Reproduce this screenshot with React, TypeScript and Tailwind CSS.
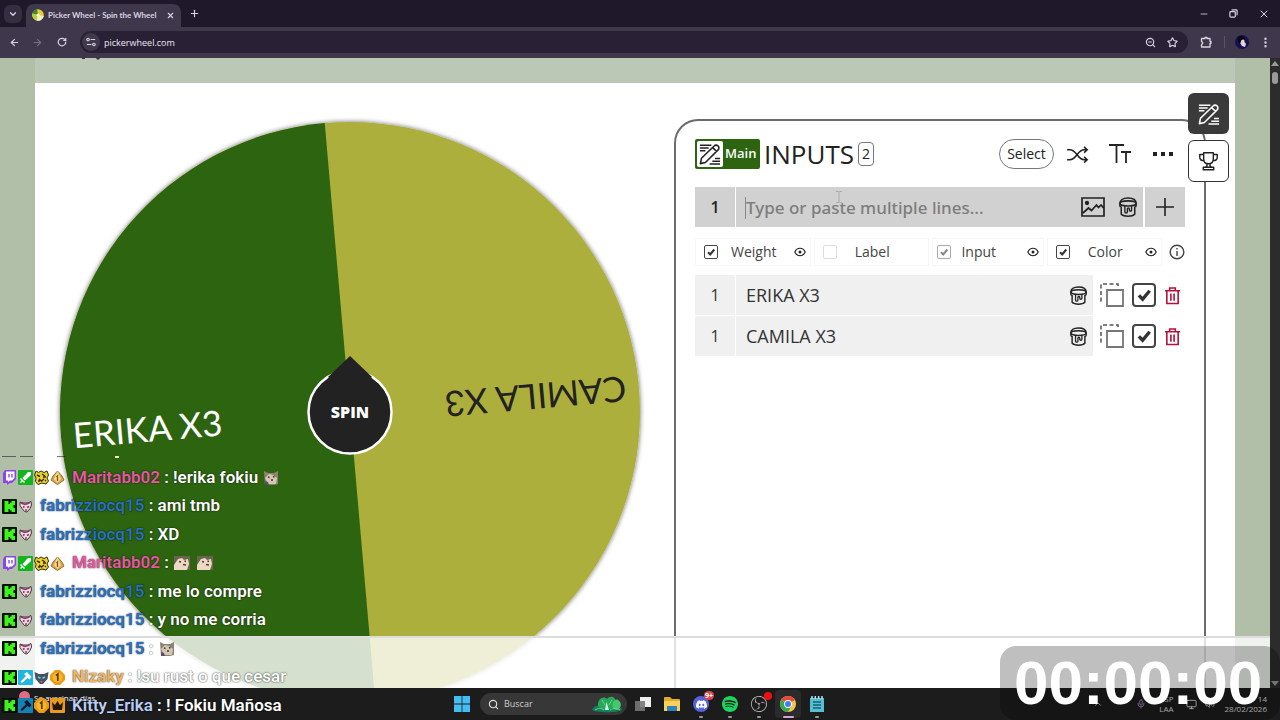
import { useState } from 'react';
import type { ReactNode } from 'react';
import {
  ArrowLeft,
  ArrowRight,
  ChevronDown,
  ChevronUp,
  EllipsisVertical,
  Mic,
  Minus,
  Monitor,
  Plus,
  RotateCw,
  Search,
  Star,
  Volume2,
  X,
  ZoomOut,
} from 'lucide-react';
import { SiObsstudio, SiSpotify, SiDiscord } from 'react-icons/si';

type IconProps = { className?: string };

const PencilLinesIcon = ({ className }: IconProps) => (
  <svg viewBox="0 0 24 24" fill="none" stroke="currentColor" className={className}>
    <path d="M1 2.500h12.500M1 5.500h9.500M1 8.500h6M17.500 17h5.500M14.500 20h8.500M11.500 23h11.500" strokeWidth="1.600" />
    <path
      d="M1.500 22.500l1.200-5.800L16.500 3.200a3 3 0 0 1 4.300 0 3 3 0 0 1 0 4.300L7 21.200zM15 5l4.200 4.200"
      strokeWidth="1.700"
      strokeLinejoin="round"
    />
  </svg>
);

const TrophyIcon = ({ className }: IconProps) => (
  <svg viewBox="0 0 24 24" fill="none" stroke="currentColor" strokeWidth="1.600" strokeLinejoin="round" className={className}>
    <path d="M6.500 2h11v7c0 3.500-2 5.500-5.500 5.500s-5.500-2-5.500-5.500z" />
    <path d="M6.500 4H2v3c0 2.300 2 4 5 4M17.500 4H22v3c0 2.300-2 4-5 4M10.300 14.500v2.500L8.500 18.500M13.700 14.500v2.500l1.800 1.500M6 18.500h12v3H6z" />
  </svg>
);

const BucketIcon = ({ className }: IconProps) => (
  <svg viewBox="2 1 20 22" fill="none" stroke="currentColor" strokeWidth="1.700" strokeLinejoin="round" className={className}>
    <ellipse cx="12" cy="8" rx="9" ry="2.800" />
    <path d="M3 8c0-3.500 3-6 9-6s9 2.500 9 6M3 8v2.500c0 1 1 1.500 2 1.800M21 8v2.500c0 1-1 1.500-2 1.800M4.500 11.500V20c1.500 1.500 4 2.200 7.500 2.200s6-.7 7.500-2.200v-8.500" />
    <path d="M8.500 11v6.500c0 1.600 2.800 1.600 2.800 0V14c0-1.300 2.200-1.300 2.200 0v1.500c0 1.300 2.500 1.300 2.500 0V11" strokeWidth="1.500" />
  </svg>
);

const PictureIcon = ({ className }: IconProps) => (
  <svg viewBox="0 0 24 20" fill="none" stroke="currentColor" strokeWidth="1.700" className={className}>
    <path d="M1 1h22v18H1zM2 16l5.500-5 3 2.500 5-5.500 2 2.500L20 8l3 3.500" />
    <circle cx="6" cy="6" r="1.300" fill="currentColor" />
  </svg>
);

const ShuffleIcon = ({ className }: IconProps) => (
  <svg viewBox="0 0 24 18" fill="none" stroke="currentColor" strokeWidth="1.700" className={className}>
    <path d="M1 4h3c7 0 8 10.500 15 10.500h3M1 14.500h3c7 0 8-10.500 15-10.500h3M19 1l3.200 3L19 7M19 11.500l3.200 3-3.200 3" />
  </svg>
);

const TextSizeIcon = ({ className }: IconProps) => (
  <svg viewBox="0 0 22 20" fill="none" stroke="currentColor" strokeWidth="1.800" className={className}>
    <path d="M0 1h15M7.500 1v18M12 8h10M17 8v11" />
  </svg>
);

const EyeIcon = ({ className }: IconProps) => (
  <svg viewBox="0 0 12 10" fill="none" stroke="currentColor" strokeWidth="1.200" className={className}>
    <path d="M.8 5c2.400-5 8-5 10.400 0-2.400 5-8 5-10.400 0z" />
    <circle cx="6" cy="5" r="1.500" fill="currentColor" stroke="none" />
  </svg>
);

const DuplicateIcon = ({ className }: IconProps) => (
  <svg viewBox="0 0 26 26" fill="none" className={className}>
    <path d="M19 4V2H2v17h3" stroke="#555" strokeWidth="1.500" strokeDasharray="4 2.500" />
    <path d="M8 8h16v16H8z" stroke="#777" strokeWidth="1.800" />
  </svg>
);

const TrashIcon = ({ className }: IconProps) => (
  <svg viewBox="0 0 18 20" fill="none" stroke="currentColor" strokeWidth="1.700" className={className}>
    <path d="M1 5h16M6 5V2h6v3M3 5v13.500h12V5M7.300 8v7.500M10.700 8v7.500" />
  </svg>
);

const InfoIcon = ({ className }: IconProps) => (
  <svg viewBox="0 0 16 16" fill="none" stroke="currentColor" strokeWidth="1.400" className={className}>
    <circle cx="8" cy="8" r="6.800" />
    <path d="M8 7v5M8 4v1.500" />
  </svg>
);

const BrowserChrome = () => (
  <header className="shrink-0 text-[#d8d3e0]">
    <div className="flex h-[27px] items-center bg-[#1f182b] pl-1">
      <button aria-label="Search tabs" className="flex h-[18px] w-[18px] items-center justify-center rounded-md bg-[#352e42]">
        <ChevronDown size={10} strokeWidth={3} />
      </button>
      <div className="ml-1 flex h-[23px] w-[155px] items-center self-end rounded-t-lg bg-[#3f374b] pr-[6px] pb-px pl-[6px]">
        <svg viewBox="0 0 12 12" className="h-3 w-3 shrink-0">
          <circle cx="6" cy="6" r="5.800" fill="#ecc83a" />
          <path d="M6 6 .5 4.500A5.800 5.800 0 0 1 5 .3z" fill="#2f8f2f" />
          <path d="M6 6 .5 4.500A5.800 5.800 0 0 0 4.500 11.600z" fill="#b9cf3c" />
          <path d="M6 6 11.800 7A5.800 5.800 0 0 1 4.500 11.600z" fill="#f2efc0" />
          <circle cx="6" cy="6" r="1.500" fill="#fff" />
        </svg>
        <span className="ml-1 flex-1 font-['Lato',sans-serif] text-[8px] font-bold whitespace-nowrap">Picker Wheel - Spin the Wheel</span>
        <button aria-label="Close tab">
          <X size={9} strokeWidth={3} />
        </button>
      </div>
      <button aria-label="New tab" className="ml-2">
        <Plus size={11} strokeWidth={2.5} />
      </button>
      <div className="ml-auto flex items-center gap-5 pr-[10px]">
        <button aria-label="Minimize"><Minus size={10} /></button>
        <button aria-label="Restore">
          <svg viewBox="0 0 10 10" fill="none" stroke="currentColor" strokeWidth="1.300" className="h-[9px] w-[9px]">
            <rect x="1" y="3" width="6" height="6" rx="1" />
            <path d="M3 1.500A1 1 0 0 1 4 1h4a1 1 0 0 1 1 1v4a1 1 0 0 1-.5 1" />
          </svg>
        </button>
        <button aria-label="Close"><X size={12} /></button>
      </div>
    </div>
    <div className="flex h-[31px] items-center bg-[#3f374b] px-2 pb-px">
      <button aria-label="Back" className="w-6 pl-px"><ArrowLeft size={11} strokeWidth={2.5} /></button>
      <button aria-label="Forward" className="w-6 text-[#766e82]"><ArrowRight size={11} strokeWidth={2.5} /></button>
      <button aria-label="Reload" className="w-6 pl-px"><RotateCw size={10} strokeWidth={3} /></button>
      <div className="flex h-[22px] flex-1 items-center rounded-full bg-[#292035] pr-[10px] pl-[2px]">
        <span className="flex h-[18px] w-[18px] items-center justify-center rounded-full bg-[#40384c]">
          <svg viewBox="0 0 12 12" fill="none" stroke="currentColor" strokeWidth="1.400" className="h-[10px] w-[10px]">
            <circle cx="2.500" cy="3" r="1.500" />
            <path d="M5.500 3H11M1 9h5.500" />
            <circle cx="9.500" cy="9" r="1.500" />
          </svg>
        </span>
        <input
          aria-label="Address"
          defaultValue="pickerwheel.com"
          className="ml-1 h-4 flex-1 bg-transparent text-[9px] font-medium text-[#ece8f2] outline-none"
        />
        <ZoomOut size={11} strokeWidth={2.500} />
        <button aria-label="Bookmark" className="ml-[11px]"><Star size={11} strokeWidth={2.500} /></button>
      </div>
      <button aria-label="Extensions" className="ml-3">
        <svg viewBox="0 0 12 12" fill="none" stroke="currentColor" strokeWidth="1.300" strokeLinejoin="round" className="h-3 w-3">
          <path d="M1.500 2.500H5V1.500h2v1h3V5.500h1v2h-1V11H1.500V8.300c1.600 0 1.600-2.600 0-2.600z" />
        </svg>
      </button>
      <span className="ml-3 h-3 w-px bg-[#5b5368]" />
      <svg viewBox="0 0 14 14" className="ml-[10px] h-[14px] w-[14px]">
        <circle cx="7" cy="7" r="7" fill="#161250" />
        <path d="M5 5c2-2 5-1 4.500 2l1.500 2-1 3-3-1-2-3z" fill="#ead3dc" />
        <path d="M3 2c3-2 7-1 7 2L6.500 5 5 9C3 8 2 5 3 2z" fill="#09070f" />
      </svg>
      <button aria-label="Menu" className="ml-[10px]"><EllipsisVertical size={13} strokeWidth={2.500} /></button>
    </div>
  </header>
);

const Wheel = () => (
  <div className="relative h-[600px] w-[600px] shrink-0">
    <svg viewBox="0 0 600 600" className="h-full w-full">
      <defs>
        <filter id="wheel-shadow" x="-5%" y="-5%" width="110%" height="110%">
          <feDropShadow dx="0" dy="0" stdDeviation="2.500" floodColor="#000" floodOpacity="0.600" />
        </filter>
      </defs>
      <circle cx="300" cy="300" r="290" fill="#adaf3d" filter="url(#wheel-shadow)" />
      <g transform="rotate(-5 300 300)">
        <path d="M300 10a290 290 0 0 0 0 580z" fill="#2d6410" />
        <text x="22" y="312" fontSize="35" fill="#fff" className="font-['Lato',sans-serif]">ERIKA X3</text>
        <g transform="rotate(180 300 300)">
          <text x="23" y="312" fontSize="35" fill="#222" className="font-['Lato',sans-serif]">CAMILA X3</text>
        </g>
      </g>
    </svg>
    <button className="absolute inset-0 m-auto flex h-[112px] w-[88px] items-center justify-center font-['Open_Sans',sans-serif] text-base font-extrabold text-white">
      <svg viewBox="0 0 88 112" className="absolute inset-0 h-full w-full">
        <circle cx="44" cy="56" r="41.500" fill="#222" stroke="#fff" strokeWidth="2.500" />
        <path d="M44 0 66 21 44 40 22 21z" fill="#222" />
      </svg>
      <span className="relative">SPIN</span>
    </button>
  </div>
);

type CheckboxProps = {
  label: string;
  checked: boolean;
  muted?: boolean;
  large?: boolean;
  faint?: boolean;
  onChange: () => void;
};

const Checkbox = ({ label, checked, muted, large, faint, onChange }: CheckboxProps) => (
  <span className={`relative inline-flex shrink-0 ${large ? 'h-6 w-6' : 'h-[14px] w-[14px]'}`}>
    <input
      type="checkbox"
      id={label}
      aria-label={label}
      checked={checked}
      onChange={onChange}
      className={`h-full w-full appearance-none bg-white ${large ? 'rounded border-2' : 'rounded-xs border'} ${
        faint ? 'border-[#ddd]' : muted ? 'border-[#aaa]' : 'border-[#444]'
      }`}
    />
    {checked && (
      <svg viewBox="0 0 14 14" fill="none" stroke={muted ? '#888' : '#333'} strokeWidth="2" className="pointer-events-none absolute inset-0 h-full w-full">
        <path d="M4 7.200l2.200 2.300L10.300 4.500" />
      </svg>
    )}
  </span>
);

const columns = [
  { name: 'Weight', eye: true, muted: false },
  { name: 'Label', eye: false, muted: false },
  { name: 'Input', eye: true, muted: true },
  { name: 'Color', eye: true, muted: false },
];

const InputsPanel = () => {
  const [entries, setEntries] = useState([
    { name: 'ERIKA X3', enabled: true },
    { name: 'CAMILA X3', enabled: true },
  ]);
  const [shown, setShown] = useState<string[]>(['Weight', 'Input', 'Color']);

  const toggleColumn = (name: string) => {
    setShown(shown.includes(name) ? shown.filter((s) => s !== name) : [...shown, name]);
  };

  const toggleEntry = (index: number) => {
    setEntries(entries.map((e, i) => (i === index ? { ...e, enabled: !e.enabled } : e)));
  };

  return (
    <section className="mt-9 w-[532px] shrink-0 rounded-t-3xl border-2 border-b-0 border-[#6b6b6b] bg-white px-[19px] pt-4 font-['Open_Sans',sans-serif] text-[#222]">
      <div className="flex h-[34px] items-center">
        <button className="flex h-[30px] w-[65px] items-center rounded-xs bg-[#2d6410] pl-[2px] text-[13px] font-semibold text-white">
          <span className="mr-[2px] flex h-[26px] w-[26px] items-center justify-center rounded-xs bg-white text-[#222]">
            <PencilLinesIcon className="h-[22px] w-[22px]" />
          </span>
          Main
        </button>
        <h2 className="ml-1 text-[26px] leading-8 font-medium">INPUTS</h2>
        <span className="ml-1 flex h-6 w-4 items-center justify-center rounded border border-[#777] text-sm">2</span>
        <button className="ml-auto h-[30px] w-[55px] rounded-full border border-[#777] text-sm">Select</button>
        <button aria-label="Shuffle" className="ml-3"><ShuffleIcon className="h-[17px] w-[23px]" /></button>
        <button aria-label="Text size" className="ml-5"><TextSizeIcon className="h-5 w-[22px]" /></button>
        <button aria-label="More" className="mr-3 ml-[22px] flex gap-1">
          <i className="h-1 w-1 bg-[#222]" />
          <i className="h-1 w-1 bg-[#222]" />
          <i className="h-1 w-1 bg-[#222]" />
        </button>
      </div>

      <div className="mt-4 flex h-10 gap-px">
        <div className="flex w-10 items-center justify-center bg-[#d1d1d1] text-base font-semibold">1</div>
        <div className="flex flex-1 items-center gap-[14px] bg-[#d1d1d1] pr-[6px] pl-[10px]">
          <input
            aria-label="Entry"
            placeholder="Type or paste multiple lines..."
            className="h-7 min-w-0 flex-1 bg-transparent font-['Noto_Sans',sans-serif] text-[17px] font-medium outline-none placeholder:text-[#7d7d7d]"
          />
          <button aria-label="Add image"><PictureIcon className="h-5 w-6" /></button>
          <button aria-label="Pick color"><BucketIcon className="h-5 w-[18px]" /></button>
        </div>
        <button aria-label="Add" className="ml-px flex w-10 items-center justify-center bg-[#d1d1d1]">
          <svg viewBox="0 0 20 20" stroke="currentColor" strokeWidth="1.600" className="h-5 w-5">
            <path d="M10 1v18M1 10h18" />
          </svg>
        </button>
      </div>

      <div className="mt-[11px] flex h-7 items-center gap-[3px] text-sm text-[#444]">
        {columns.map((c) => (
          <div key={c.name} className={`flex h-7 flex-1 items-center border border-[#f7f7f7] pr-1 ${c.muted ? 'pl-1' : 'pl-2'}`}>
            <Checkbox label={c.name} checked={shown.includes(c.name)} muted={c.muted} faint={!c.eye} onChange={() => toggleColumn(c.name)} />
            <label htmlFor={c.name} className={`flex-1 text-center ${c.muted ? 'pr-5' : 'pr-1'}`}>{c.name}</label>
            <span className="flex w-3">{c.eye && <EyeIcon className="h-[10px] w-3 text-[#222]" />}</span>
          </div>
        ))}
        <button aria-label="Info" className="ml-1"><InfoIcon className="h-4 w-4" /></button>
      </div>

      <ul className="mt-[9px] flex flex-col gap-px">
        {entries.map((entry, index) => (
          <li key={entry.name} className="flex h-10 items-center text-[#333]">
            <span className="mr-px flex h-10 w-10 items-center justify-center bg-[#f0f0f0] text-base">1</span>
            <span className="flex h-10 flex-1 items-center justify-between bg-[#f0f0f0] pr-[6px] pl-[10px] text-lg">
              {entry.name}
              <button aria-label="Pick color" className="text-[#222]"><BucketIcon className="h-[19px] w-[17px]" /></button>
            </span>
            <button aria-label="Duplicate" className="ml-[6px]"><DuplicateIcon className="h-[26px] w-[26px]" /></button>
            <span className="ml-[7px] flex">
              <Checkbox large label={`Enable ${entry.name}`} checked={entry.enabled} onChange={() => toggleEntry(index)} />
            </span>
            <button aria-label="Delete" className="mr-1 ml-2 text-[#b3123b]"><TrashIcon className="h-[19px] w-[17px]" /></button>
          </li>
        ))}
      </ul>
    </section>
  );
};

const TwitchBadge = () => (
  <svg viewBox="0 0 15 15" className="h-[15px] w-[15px]">
    <path d="M1 3 3 0h11v9l-4 4H8l-3 2v-2H1z" fill="#8b45e8" />
    <path d="M4 1.500h8.500V8L10 10.500H8L6 12v-1.500H4z" fill="#fff" />
    <path d="M7 4v3.500M10 4v3.500" stroke="#8b45e8" strokeWidth="1.400" />
  </svg>
);

const SwordBadge = () => (
  <svg viewBox="0 0 15 15" className="h-[15px] w-[15px]">
    <rect width="15" height="15" rx="1" fill="#12b51c" />
    <path d="M13 2v3L7 10.500 4.500 8 10 2zM3 8l4 4-1 1-1.500-1.500L3 13l-1-1 1.500-1.500L2 9z" fill="#fff" />
  </svg>
);

const LeopardBadge = () => (
  <svg viewBox="0 0 15 15" className="h-[15px] w-[15px]">
    <path d="M2 1l2.500 1.500L7 1l3 1.500L13 1l1.500 4L13 8l1.500 3-2.500 3-4-1-4 1.500-2.500-3L2 8 .5 5z" fill="#ecd02e" stroke="#332c08" />
    <path d="M3 5l3 1.500M8 4l3 2M5 9l2.500 2L10 9M11 10l1 1M4 11h2M9 7h3" stroke="#332c08" strokeWidth="1.400" fill="none" />
  </svg>
);

const GemBadge = () => (
  <svg viewBox="0 0 15 15" className="h-[15px] w-[15px]">
    <path d="M7.500 1 12 6l2 4-6.500 4.500L1 10l2-4z" fill="#d8a751" stroke="#9b6d28" />
    <path d="M7.500 1 4 9l3.500 4L11 9z" fill="#f6d995" />
    <path d="M6.500 7l1-1v5" stroke="#805515" strokeWidth="1.300" fill="none" />
  </svg>
);

const KickBadge = () => (
  <svg viewBox="0 0 15 15" className="h-[15px] w-[15px]">
    <rect width="15" height="15" rx="1" fill="#071005" />
    <path d="M2.500 2h4v3H8V3.500h1.500V2H13v4h-1.500v3H13v4H9.500v-1.500H8V10H6.500v3h-4z" fill="#3df51a" />
  </svg>
);

const MaskBadge = () => (
  <svg viewBox="0 0 15 15" className="h-[15px] w-[15px]">
    <path d="M2 3l3 1h5l3-1.500.5 3.500-1.500 3.500L9 13l-2.500-.5L4 9.500 2 6.500z" fill="#f0dbe4" stroke="#4b3340" />
    <path d="M3 4l4 1.500L11.500 4M5 7.500l1.500 1M9 8.500l2-1M7 11h2" stroke="#8a3d68" strokeWidth="1.600" fill="none" />
  </svg>
);

const HammerBadge = ({ dark }: { dark?: boolean }) => (
  <svg viewBox="0 0 15 15" className="h-[15px] w-[15px]">
    <rect width="15" height="15" rx="1" fill={dark ? '#1681b4' : '#22b5df'} />
    <path d="M6 4l3-2 4.500 5-2 2.500L9.500 8 4 13l-1.500-1.500L8 6z" fill={dark ? '#0b1b2c' : '#fff'} />
  </svg>
);

const WolfBadge = () => (
  <svg viewBox="0 0 15 15" className="h-[15px] w-[15px]">
    <path d="M.5 2l4.500 2h5l4.500-2-1 7-4.500 5H6L1.500 9z" fill="#4a5160" />
    <path d="M4 7l2.500 1.200M11 7 8.500 8.200" stroke="#5ed2e8" strokeWidth="1.500" />
    <path d="M6 11l1.500 2L9 11z" fill="#c9576b" />
  </svg>
);

const CoinBadge = () => (
  <svg viewBox="0 0 15 15" className="h-[15px] w-[15px]">
    <path d="M5 0h5l5 5v5l-5 5H5l-5-5V5z" fill="#e99b13" />
    <circle cx="7.500" cy="7.500" r="5" fill="#f7b62c" />
    <path d="M6 5.500 7.800 4v7" stroke="#5e3904" strokeWidth="1.700" fill="none" />
  </svg>
);

const CrownBadge = () => (
  <svg viewBox="0 0 15 15" className="h-[15px] w-[15px]">
    <rect width="15" height="15" rx="1" fill="#e79a1b" />
    <path d="M2 4l3 3 2.500-4L10 7l3-3-1 8H3z" fill="#241804" />
  </svg>
);

const CatEmote = () => (
  <svg viewBox="0 0 16 16" className="h-4 w-4">
    <path d="M1 1l4 2h6l4-2v13l-4 1H2z" fill="#8d8273" />
    <path d="M2 8l4-4 4 1 4 3-1 6H5z" fill="#d3c6b4" />
    <path d="M5 7l1.500.5M10 7l1.500-.5M8 10h2" stroke="#3d3532" strokeWidth="1.400" />
    <path d="M2 11l3 1 1 3H2z" fill="#59506e" />
  </svg>
);

const DogEmote = () => (
  <svg viewBox="0 0 16 16" className="h-4 w-4">
    <path d="M0 1h16v14H0z" fill="#6b6450" />
    <path d="M0 10l4-6 4-1 2 2 4-1 1 5-2 6H0z" fill="#ecdac6" />
    <path d="M5 6.500l2 .5M10.500 6l1.500.5M9 9.500l3 .5" stroke="#5b392d" strokeWidth="1.400" />
  </svg>
);

const marita = [<TwitchBadge key="t" />, <SwordBadge key="s" />, <LeopardBadge key="l" />, <GemBadge key="g" />];
const fabri = [<KickBadge key="k" />, <MaskBadge key="m" />];

const messages: { user: string; color: string; badges: ReactNode[]; body: ReactNode }[] = [
  { user: 'Maritabb02', color: 'text-[#e858a4]', badges: marita, body: <>!erika fokiu <CatEmote /></> },
  { user: 'fabrizziocq15', color: 'text-[#2871c2]', badges: fabri, body: 'ami tmb' },
  { user: 'fabrizziocq15', color: 'text-[#2871c2]', badges: fabri, body: 'XD' },
  { user: 'Maritabb02', color: 'text-[#e858a4]', badges: marita, body: <><DogEmote /><span className="w-[5px]" /><DogEmote /></> },
  { user: 'fabrizziocq15', color: 'text-[#2871c2]', badges: fabri, body: 'me lo compre' },
  { user: 'fabrizziocq15', color: 'text-[#2871c2]', badges: fabri, body: 'y no me corria' },
  { user: 'fabrizziocq15', color: 'text-[#2871c2]', badges: fabri, body: <CatEmote /> },
  {
    user: 'Nizaky',
    color: 'text-[#f3b660]',
    badges: [<KickBadge key="k" />, <HammerBadge key="h" />, <WolfBadge key="w" />, <CoinBadge key="c" />],
    body: '!su rust o que cesar',
  },
  {
    user: 'Kitty_Erika',
    color: 'text-[#b9cdf5]',
    badges: [<KickBadge key="k" />, <HammerBadge key="h" dark />, <CoinBadge key="c" />, <CrownBadge key="r" />],
    body: '! Fokiu Mañosa',
  },
];

const ChatOverlay = () => (
  <div className="absolute bottom-0 left-0 h-[264px] pl-[2px]">
    <div className="flex h-2 items-start gap-1">
      <i className="h-px w-[14px] bg-black/50" />
      <i className="h-px w-[13px] bg-black/50" />
      <i className="ml-5 h-px w-2 bg-black/50" />
      <i className="ml-[46px] h-[2px] w-1 bg-[#f2f0a0]" />
    </div>
    <ul className="flex h-[256px] flex-col justify-between font-['Roboto',sans-serif] text-[17px] font-semibold text-white">
      {messages.map((m, i) => (
        <li key={i} className="flex h-7 items-center whitespace-pre [text-shadow:0_0_1px_rgba(0,0,0,0.5),0_0_2px_rgba(0,0,0,0.6)]">
          <span className="mr-[7px] flex gap-px pb-px">{m.badges}</span>
          <span className={`pb-px ${m.color}`}>{m.user}</span>
          <span className="flex items-center gap-px pb-px"> : {m.body}</span>
        </li>
      ))}
    </ul>
  </div>
);

const ChromeLogo = () => (
  <svg viewBox="0 0 16 16" className="h-4 w-4">
    <circle cx="8" cy="8" r="8" fill="#f6c945" />
    <path d="M8 8 1.100 4A8 8 0 0 1 14.900 4z" fill="#e24a3b" />
    <path d="M8 8 1.100 4A8 8 0 0 0 8 16l3.500-6z" fill="#37a853" />
    <circle cx="8" cy="8" r="3.900" fill="#fff" />
    <circle cx="8" cy="8" r="3" fill="#3f7fe8" />
  </svg>
);

const TaskItem = ({ label, active, running, children }: { label: string; active?: boolean; running?: boolean; children: ReactNode }) => (
  <button
    aria-label={label}
    className={`relative flex h-7 w-[26px] items-center justify-center rounded ${active ? 'bg-[#2b2a2c]' : ''}`}
  >
    {children}
    {running && (
      <i className={`absolute bottom-0 h-[2px] rounded-full ${active ? 'w-[11px] bg-[#d9a4dc]' : 'w-1 bg-[#999]'}`} />
    )}
  </button>
);

const Taskbar = () => (
  <footer className="flex h-8 shrink-0 items-center bg-[#1c1c1c] text-white">
    <div className="flex flex-1 items-start self-stretch pt-[3px] pl-[19px] text-[8px]">
      <i className="mr-1 h-[11px] w-[11px] rounded-full bg-[#e06c86]" />
      <span className="pt-px">Se avecinan días</span>
    </div>
    <nav className="mr-[5px] flex items-center gap-[3px]">
      <button aria-label="Start" className="mr-1 flex h-7 w-[22px] items-center justify-center">
        <svg viewBox="0 0 16 16" fill="#45bdf2" className="h-4 w-4">
          <path d="M0 0h7.600v7.600H0zM8.400 0H16v7.600H8.400zM0 8.400h7.600V16H0zM8.400 8.400H16V16H8.400z" />
        </svg>
      </button>
      <label className="flex h-[22px] w-[147px] items-center rounded-full bg-[#373737] pl-2">
        <Search size={11} strokeWidth={2.500} className="text-[#ddd]" />
        <input
          type="search"
          aria-label="Buscar"
          placeholder="Buscar"
          className="ml-[5px] w-0 flex-1 bg-transparent font-['Open_Sans',sans-serif] text-[9px] outline-none placeholder:text-[#ccc]"
        />
        <svg viewBox="0 0 32 18" className="mr-1 h-[18px] w-8">
          <path d="M1 15c2-5 7-5 10-3 3-5 9-5 12-1 4-1 7 1 8 4-5 3-25 3-30 0z" fill="#15805a" />
          <path d="M7 11C6 5 12 0 16 4c4-5 11-1 8 6l-6 5h-6z" fill="#29a957" />
          <path d="M22 14c-2-6 2-11 5-9 4 2 4 8-1 10z" fill="#47c66b" />
          <path d="M15.500 7l-1.500 8h4z" fill="#d4f3ef" />
          <path d="M4 15c3-2 6-2 9 0M19 15c3-2 7-2 10 0M11 5l3 5M21 5l-3 5" stroke="#5cd69a" fill="none" />
        </svg>
      </label>
      <TaskItem label="Task view">
        <svg viewBox="0 0 16 16" className="h-4 w-4">
          <path d="M5 1h11v10H5z" fill="#eee" />
          <path d="M0 5h10v10H0z" fill="#777" opacity="0.900" />
        </svg>
      </TaskItem>
      <TaskItem label="Files">
        <svg viewBox="0 0 16 16" className="h-4 w-4">
          <path d="M0 2a1 1 0 0 1 1-1h5l2 2h7a1 1 0 0 1 1 1v11H0z" fill="#e5a92c" />
          <path d="M0 5h16v9a1 1 0 0 1-1 1H1a1 1 0 0 1-1-1z" fill="#f8d15c" />
          <path d="M3 10h10v5H3z" fill="#2d83bd" />
        </svg>
      </TaskItem>
      <TaskItem label="Discord" running>
        <span className="flex h-4 w-4 items-center justify-center rounded-full bg-[#5662dd]">
          <SiDiscord size={11} />
        </span>
        <span className="absolute top-px right-0 rounded-full bg-[#d7484f] px-px text-[7px] leading-[9px] font-bold">9+</span>
      </TaskItem>
      <TaskItem label="Spotify" running>
        <SiSpotify size={16} color="#1ed35e" />
      </TaskItem>
      <TaskItem label="OBS" running>
        <SiObsstudio size={16} color="#c8c8c8" />
        <i className="absolute top-[2px] right-0 h-2 w-2 rounded-full bg-[#f20d0d]" />
      </TaskItem>
      <TaskItem label="Chrome" active running>
        <ChromeLogo />
      </TaskItem>
      <TaskItem label="Notepad" running>
        <svg viewBox="0 0 14 16" className="h-4 w-[14px]">
          <path d="M0 2h14v14H0z" fill="#57bdd3" />
          <path d="M2 0v3M5.300 0v3M8.600 0v3M12 0v3" stroke="#b9e5ef" strokeWidth="1.500" />
          <path d="M3 6h8M3 9h8M3 12h8" stroke="#17617a" strokeWidth="1.300" />
        </svg>
      </TaskItem>
    </nav>
    <div className="flex flex-1 items-center justify-end pr-[13px] font-['Open_Sans',sans-serif] text-[8px] leading-[10px] text-[#ddd]">
      <ChevronUp size={10} className="mr-[33px]" />
      <Mic size={10} className="mr-[13px] text-[#b98ac4]" />
      <span className="mr-3 text-right">ESP<br />LAA</span>
      <Monitor size={11} className="mr-2" />
      <Volume2 size={10} className="mr-[10px]" />
      <span className="text-right">14<br />28/02/2026</span>
    </div>
  </footer>
);

const App = () => {
  return (
    <div className="relative flex h-screen w-full flex-col overflow-hidden font-['Open_Sans',sans-serif]">
      <BrowserChrome />
      <main className="relative flex min-h-0 flex-1 overflow-hidden bg-[#b1bfa8]">
        <div className="mx-[35px] flex min-w-0 flex-1 flex-col bg-white">
          <div className="h-[25px] shrink-0 bg-[#bbc8b5] pl-[47px]">
            <svg viewBox="0 0 20 2" className="h-[2px] w-5">
              <path d="M0 0h3v1H0zM14 0h4l-1 1.500h-2z" fill="#333" />
            </svg>
          </div>
          <div className="flex min-h-0 flex-1 overflow-hidden pr-[6px]">
            <div className="flex min-w-0 flex-1 justify-center pt-[29px] pr-[9px]">
              <Wheel />
            </div>
            <InputsPanel />
            <div className="z-10 -ml-[18px] flex shrink-0 flex-col gap-[6px] pt-[10px]">
              <button aria-label="Inputs" className="flex h-[41px] w-[41px] items-center justify-center rounded-md bg-[#3a3a3a] text-white">
                <PencilLinesIcon className="h-[22px] w-[22px]" />
              </button>
              <button aria-label="Results" className="flex h-[42px] w-[41px] items-center justify-center rounded-md border border-[#333] bg-white text-[#222]">
                <TrophyIcon className="h-[21px] w-[21px]" />
              </button>
            </div>
          </div>
        </div>
        <div className="flex w-[10px] shrink-0 flex-col items-center bg-[#2c2c2c] pt-[3px] pb-[2px]">
          <i className="border-x-4 border-b-[5px] border-x-transparent border-b-[#9a9a9a]" />
          <i className="mt-[6px] h-3 w-[6px] rounded-full bg-[#9a9a9a]" />
          <i className="mt-auto border-x-4 border-t-[5px] border-x-transparent border-t-[#9a9a9a]" />
        </div>
        <div className="absolute right-[10px] bottom-0 left-0 h-[52px] border-t-2 border-[#ddd] bg-white/80" />
      </main>
      <Taskbar />
      <svg viewBox="0 0 6 12" fill="none" stroke="#aaa" className="absolute top-[191px] left-[836px] h-3 w-[6px]">
        <path d="M0 .5h2.500l.5.500.5-.5H6M3 1v10M0 11.500h2.500l.5-.5.5.500H6" />
      </svg>
      <i className="absolute top-[197px] left-[745px] h-[22px] w-px bg-[#888]" />
      <ChatOverlay />
      <div
        role="timer"
        className="absolute right-0 bottom-0 flex h-[74px] w-[280px] items-center rounded-2xl bg-black/25 pl-[14px] font-['Liberation_Sans',Arial,sans-serif] text-[62px] leading-none font-bold text-white"
      >
        00:00:00
      </div>
    </div>
  );
};

export default App;
